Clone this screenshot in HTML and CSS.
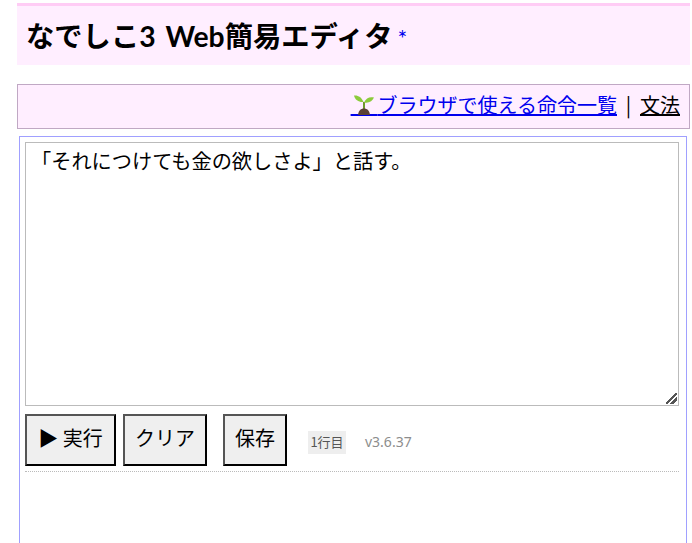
FILE: index.html
```html
<!DOCTYPE html>
<html lang="ja">
<head>
<meta charset="utf-8">
<title>なでしこ3 Web簡易エディタ</title>
<link rel="stylesheet" href="styles.css">
</head>
<body>
<header class="title-bar">
  <h1 class="title">なでしこ3 Web簡易エディタ<a class="star" href="#">*</a></h1>
</header>
<nav class="links">
  <a class="link primary" href="#"><span class="icon-gap">　</span><svg class="sprout" viewBox="0 0 26 20" width="26" height="20" aria-hidden="true"><path d="M13 16V7" stroke="#6f9a2c" stroke-width="2" fill="none"/><path d="M12.500 7C10.500 2 7 0 3 .500C4 5 8 7.500 12.500 7Z" fill="#8ccb3c"/><path d="M13 7.500C15 3 18.500 1.500 23 2.500C21.500 6 18 8.500 13 7.500Z" fill="#8ccb3c"/><path d="M7 20C7.500 15.500 10 13.500 13 13.500C16 13.500 18.500 15.500 19 20Z" fill="#5b4034"/></svg>ブラウザで使える命令一覧</a><span class="sep">|</span><a class="link grammar" href="#">文法</a>
</nav>
<main class="panel">
  <textarea class="editor" spellcheck="false">「それにつけても金の欲しさよ」と話す。</textarea>
  <div class="toolbar">
    <button class="btn run" type="button">▶ 実行</button>
    <button class="btn clear" type="button">クリア</button>
    <button class="btn save" type="button">保存</button>
    <span class="line-info">1行目</span>
    <span class="version">v3.6.37</span>
  </div>
  <div class="output"></div>
</main>
</body>
</html>
```
FILE: styles.css
```css
html, body {
  margin: 0;
  height: 100%;
  overflow: hidden;
}
body {
  padding: 3px 2px 0 17px;
  box-sizing: border-box;
  background: #fff;
  color: #000;
  font-family: "Noto Sans CJK JP", sans-serif;
}
.title-bar {
  height: 62px;
  box-sizing: border-box;
  border-top: 3px solid #ffccf5;
  background: #ffeeff;
  padding: 2px 0 0 9px;
  display: flex;
  align-items: center;
}
.title {
  margin: 0;
  font: 700 28.300px/1.2 Lato, "Noto Sans CJK JP", sans-serif;
  word-spacing: 3px;
}
.star {
  font-size: 23px;
  font-weight: 400;
  color: #0000ee;
  text-decoration: none;
  margin-left: 5px;
}
.links {
  margin-top: 19px;
  height: 45px;
  box-sizing: border-box;
  border: 1px solid #c0a8c4;
  background: #ffeeff;
  padding: 0 9px 4px 0;
  display: flex;
  align-items: center;
  justify-content: flex-end;
  font-size: 20px;
  line-height: 1.3;
  white-space: pre;
}
.link {
  color: #0000ee;
  text-decoration: underline;
}
.primary {
  position: relative;
}
.icon-gap {
  letter-spacing: 7px;
}
.sprout {
  position: absolute;
  left: 0;
  bottom: 3px;
}
.grammar {
  color: #000;
}
.sep {
  width: 23px;
  text-align: center;
  color: #000;
}
.panel {
  margin: 7px 3px 0 2px;
  height: 420px;
  box-sizing: border-box;
  border: 1px solid #a0a0ff;
  border-bottom: 0;
  padding: 5px 7px 0 5px;
}
.editor {
  display: block;
  width: 100%;
  height: 264px;
  box-sizing: border-box;
  margin: 0;
  padding: 5px 5px;
  border: 1px solid #bbb;
  border-radius: 0;
  outline: 0;
  font: 20.200px/1.25 "Noto Sans CJK JP", sans-serif;
  color: #000;
  resize: both;
}
.editor::-webkit-resizer {
  background: linear-gradient(135deg, transparent 42%, #555 42%, #555 56%, transparent 56%, transparent 68%, #555 68%, #555 82%, transparent 82%) no-repeat right 1px bottom 1px / 11px 11px;
}
.toolbar {
  display: flex;
  align-items: flex-start;
  margin-top: 8px;
  padding-bottom: 5px;
  border-bottom: 1px dotted #bbb;
}
.btn {
  height: 52px;
  box-sizing: border-box;
  margin: 0;
  padding: 0 10px 4px;
  background: #efefef;
  color: #000;
  border: 2px solid;
  border-color: #555 #000 #000 #555;
  border-radius: 0;
  font: 20px/1.2 "Noto Sans CJK JP", sans-serif;
  white-space: nowrap;
}
.run { width: 91px; }
.clear { width: 84px; margin-left: 7px; }
.save { width: 64px; margin-left: 16px; }
.line-info {
  margin: 17px 0 0 21px;
  width: 38px;
  height: 23px;
  box-sizing: border-box;
  background: #eee;
  color: #555;
  font-size: 13px;
  line-height: 21px;
  text-align: center;
}
.version {
  margin: 18px 0 0 19px;
  color: #8d8d8d;
  font: 14px/19px "Noto Sans", sans-serif;
}
```
